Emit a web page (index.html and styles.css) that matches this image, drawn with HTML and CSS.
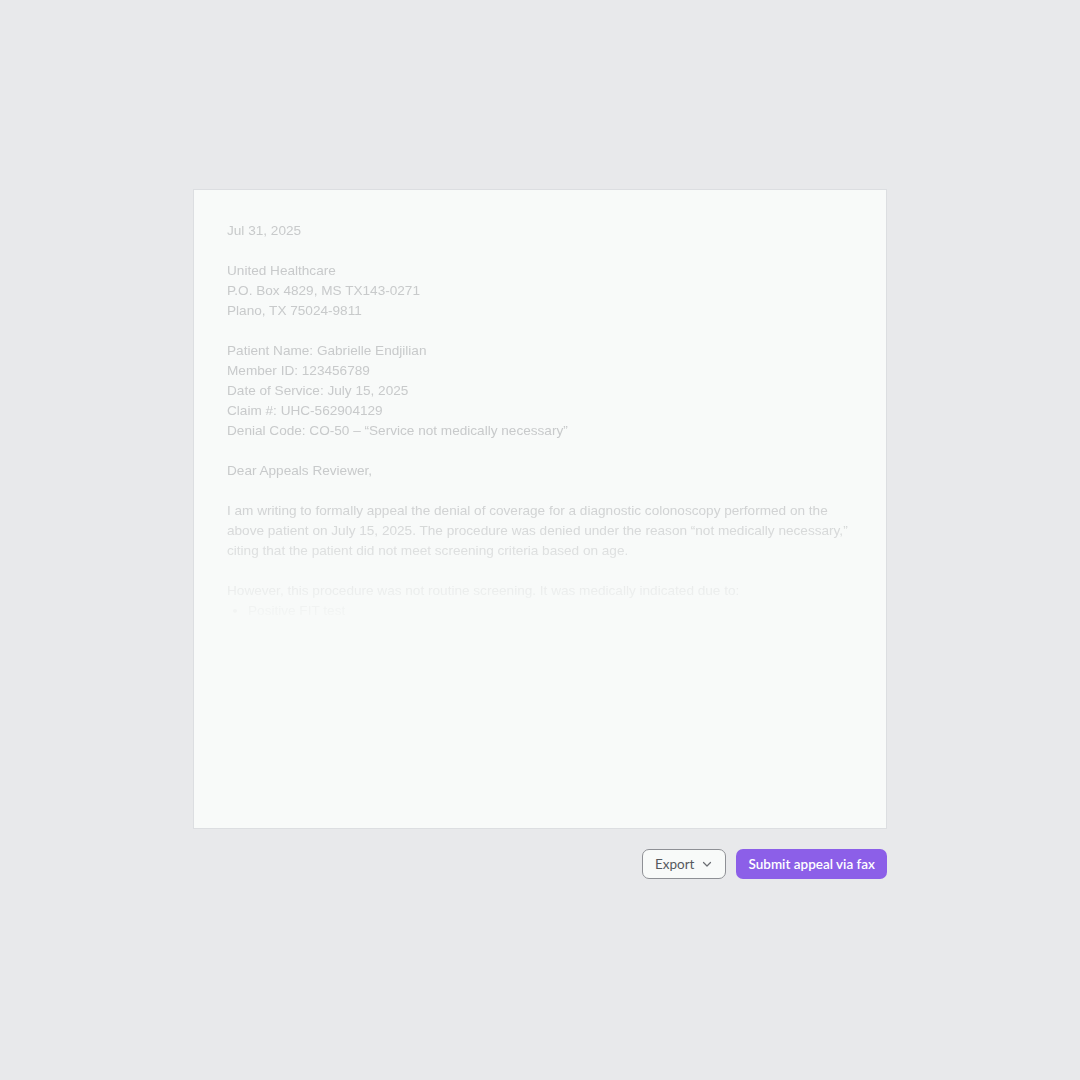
FILE: index.html
```html
<!DOCTYPE html>
<html lang="en">
<head>
  <meta charset="UTF-8" />
  <title>Appeal Letter</title>
  <link rel="stylesheet" href="styles.css">
</head>
<body>
  <div class="wrap">
    <div class="paper">
      <div class="letter">
        <p>Jul 31, 2025</p>
        <p>United Healthcare<br>P.O. Box 4829, MS TX143-0271<br>Plano, TX 75024-9811</p>
        <p>Patient Name: Gabrielle Endjilian<br>Member ID: 123456789<br>Date of Service: July 15, 2025<br>Claim #: UHC-562904129<br>Denial Code: CO-50 – “Service not medically necessary”</p>
        <p>Dear Appeals Reviewer,</p>
        <p>I am writing to formally appeal the denial of coverage for a diagnostic colonoscopy performed on the above patient on July 15, 2025. The procedure was denied under the reason “not medically necessary,” citing that the patient did not meet screening criteria based on age.</p>
        <p class="tight">However, this procedure was not routine screening. It was medically indicated due to:</p>
        <ul>
          <li>Positive FIT test</li>
          <li>Iron-deficiency anemia</li>
        </ul>
      </div>
    </div>
    <div class="actions">
      <button class="btn export">Export
        <svg width="12" height="12" viewBox="0 0 12 12"><path d="M2.5 4.5 6 8l3.5-3.5" fill="none" stroke="currentColor" stroke-width="1.2" stroke-linecap="round" stroke-linejoin="round"/></svg>
      </button>
      <button class="btn submit">Submit appeal via fax</button>
    </div>
  </div>
</body>
</html>
```

FILE: styles.css
```css
body {margin:0; background:#e8e9eb; font-family:"Liberation Sans", Arial, sans-serif;}
.wrap {width:694px; margin:189px 0 0 193px;}
.paper {height:640px; box-sizing:border-box; background:#f8faf9; border:1px solid #dcdee1; padding:31px 33px 0 33px; overflow:hidden;}
.letter {font-size:13.6px; line-height:20px; color:#c8cacb;
  -webkit-mask-image:linear-gradient(to bottom, #000 0, #000 260px, rgba(0,0,0,0.55) 330px, rgba(0,0,0,0.18) 380px, transparent 405px);
  mask-image:linear-gradient(to bottom, #000 0, #000 260px, rgba(0,0,0,0.55) 330px, rgba(0,0,0,0.18) 380px, transparent 405px);}
.letter p {margin:0 0 20px;}
.letter p.tight {margin:0;}
.letter ul {margin:0; padding-left:21px;}
.actions {display:flex; justify-content:flex-end; gap:10px; margin-top:20px;}
.btn {font-family:Lato, "Noto Sans", sans-serif; font-size:13.5px; height:30px; border-radius:7px; padding:0 12px; display:flex; align-items:center; gap:7px; cursor:pointer;}
.export {background:#f8faf9; border:1px solid #8e9095; color:#55585d;}
.export svg {color:#6b6e73;}
.submit {background:#8c5fe8; border:none; color:#fff; font-weight:600;}
```
